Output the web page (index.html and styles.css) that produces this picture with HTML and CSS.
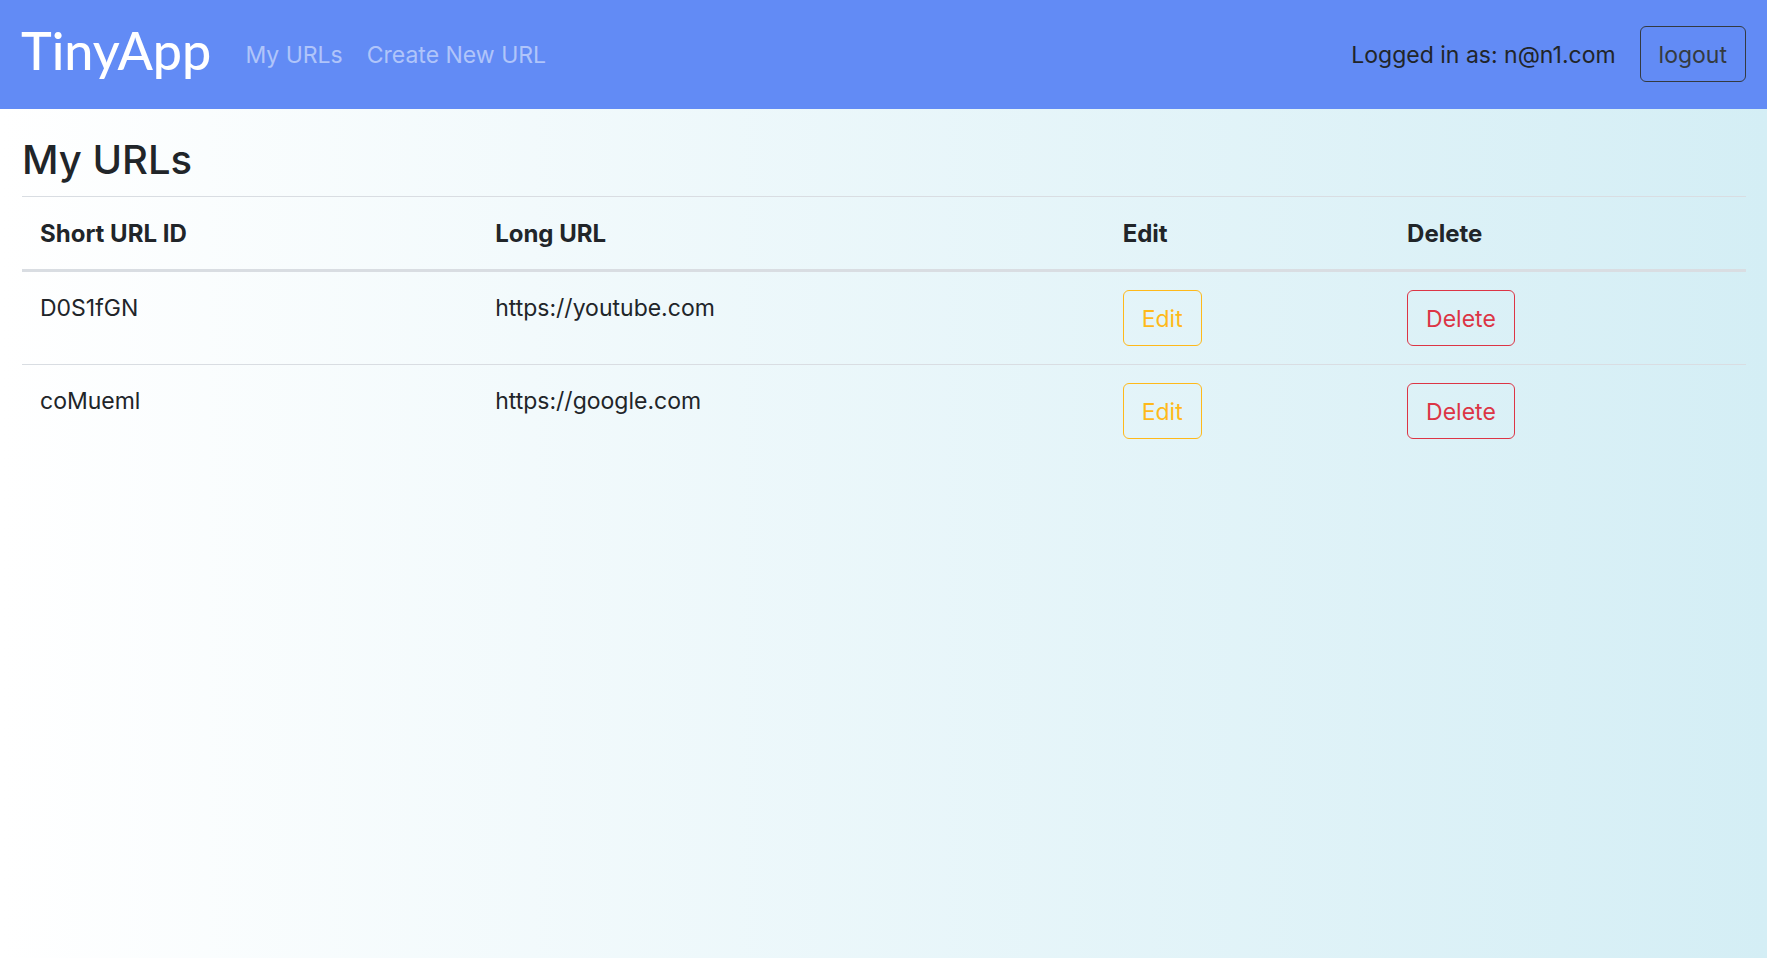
FILE: index.html
```html
<!DOCTYPE html>
<html lang="en">
<head>
  <meta charset="utf-8">
  <meta name="viewport" content="width=device-width, initial-scale=1">
  <title>TinyApp</title>
  <link rel="stylesheet" href="styles.css">
</head>
<body>
  <header class="navbar">
    <a class="brand" href="#">TinyApp</a>
    <nav class="nav-links">
      <a class="nav-link" href="#">My URLs</a>
      <a class="nav-link" href="#">Create New URL</a>
    </nav>
    <form class="account">
      <span>Logged in as: n@n1.com</span>
      <button class="btn btn-dark" type="submit">logout</button>
    </form>
  </header>
  <main class="content">
    <h1 class="title">My URLs</h1>
    <table class="url-table">
      <colgroup>
        <col class="col-short">
        <col class="col-long">
        <col class="col-edit">
        <col class="col-delete">
      </colgroup>
      <thead>
        <tr>
          <th scope="col">Short URL ID</th>
          <th scope="col">Long URL</th>
          <th scope="col">Edit</th>
          <th scope="col">Delete</th>
        </tr>
      </thead>
      <tbody>
        <tr>
          <td>D0S1fGN</td>
          <td>https://youtube.com</td>
          <td><button class="btn btn-warning" type="button">Edit</button></td>
          <td><button class="btn btn-danger" type="button">Delete</button></td>
        </tr>
        <tr>
          <td>coMueml</td>
          <td>https://google.com</td>
          <td><button class="btn btn-warning" type="button">Edit</button></td>
          <td><button class="btn btn-danger" type="button">Delete</button></td>
        </tr>
      </tbody>
    </table>
  </main>
</body>
</html>
```
FILE: styles.css
```css
* {
  box-sizing: border-box;
}

body {
  margin: 0;
  min-height: 100vh;
  background: linear-gradient(to right, #ffffff, #d4eef5);
  color: #212529;
  font-family: Inter, "Liberation Sans", sans-serif;
  font-size: 23px;
  line-height: 36px;
}

.navbar {
  display: flex;
  align-items: center;
  padding: 12px 21px 13px;
  background: #628bf5;
}

.brand {
  margin-right: 34px;
  padding: 2px 0 10px;
  color: #ffffff;
  font-family: Lato, "Liberation Sans", sans-serif;
  font-size: 52px;
  font-weight: 500;
  line-height: 72px;
  text-decoration: none;
}

.nav-links {
  display: flex;
  gap: 24px;
}

.nav-link {
  color: rgba(255, 255, 255, 0.5);
  text-decoration: none;
}

.account {
  display: flex;
  align-items: center;
  gap: 24px;
  margin-left: auto;
}

.nav-link,
.account span {
  padding-top: 1px;
}

.btn {
  display: block;
  padding: 10px 18px 8px;
  border: 1px solid;
  border-radius: 6px;
  background: transparent;
  font: inherit;
}

.btn-dark {
  color: #343a40;
}

.btn-warning {
  color: #ffb91a;
}

.btn-danger {
  color: #dc3545;
}

.content {
  padding: 25px 21px 24px 22px;
}

.title {
  margin: 0 0 11px;
  font-size: 40px;
  font-weight: 500;
  line-height: 51px;
}

.url-table {
  width: 100%;
  border-spacing: 0;
  table-layout: fixed;
}

.col-short {
  width: 26.4%;
}

.col-long {
  width: 36.4%;
}

.col-edit {
  width: 16.5%;
}

.url-table th,
.url-table td {
  padding: 18px;
  border-top: 1px solid #d9dde2;
  text-align: left;
  vertical-align: top;
}

.url-table th {
  padding: 19px 18px 17px;
  border-bottom: 3px solid #d9dde2;
  font-size: 24px;
  font-weight: 700;
}

.url-table tbody tr:first-child td {
  border-top: 0;
}
```
